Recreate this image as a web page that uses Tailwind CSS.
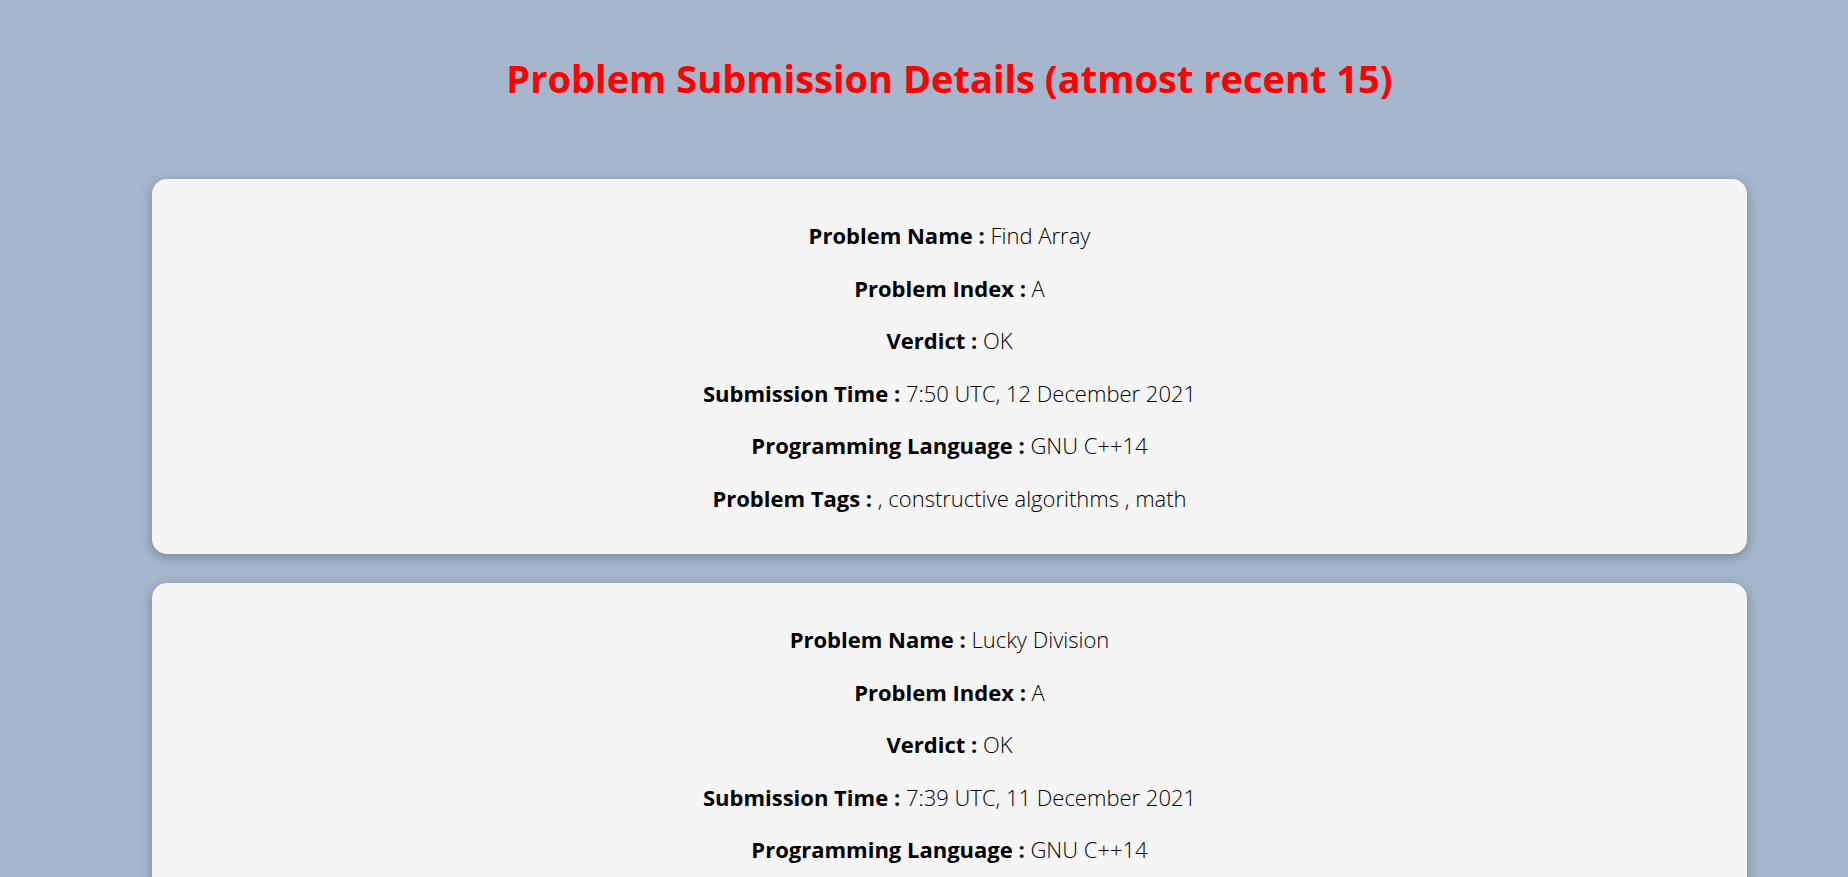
<!DOCTYPE html>
<html lang="en">
<head>
<meta charset="utf-8">
<title>Problem Submission Details</title>
<script src="https://cdn.jsdelivr.net/npm/@tailwindcss/browser@4"></script>
</head>
<body class="bg-[#a5b6cd] min-h-screen overflow-x-hidden font-['Segoe_UI','Open_Sans','Noto_Sans',sans-serif] text-black text-center">
<main class="h-screen overflow-hidden pl-[152px] pr-[101px] pt-[53px]">
<h1 class="text-[38px] leading-[50px] font-[680] text-[#ff0000]">Problem Submission Details (atmost recent 15)</h1>
<div class="mt-[76px] flex flex-col gap-[29px] text-[22px] leading-[30px] font-[330]">
<article class="grid grid-rows-6 items-center min-h-[375px] py-[30px] rounded-[15px] bg-[#f5f5f5] shadow-[0_3px_12px_0_rgba(0,0,0,0.28)]">
<p><b class="font-[660]">Problem Name :</b> Find Array</p>
<p><b class="font-[660]">Problem Index :</b> A</p>
<p><b class="font-[660]">Verdict :</b> OK</p>
<p><b class="font-[660]">Submission Time :</b> 7:50 UTC, 12 December 2021</p>
<p><b class="font-[660]">Programming Language :</b> GNU C++14</p>
<p><b class="font-[660]">Problem Tags :</b> , constructive algorithms , math</p>
</article>
<article class="grid grid-rows-6 items-center min-h-[375px] py-[30px] rounded-[15px] bg-[#f5f5f5] shadow-[0_3px_12px_0_rgba(0,0,0,0.28)]">
<p><b class="font-[660]">Problem Name :</b> Lucky Division</p>
<p><b class="font-[660]">Problem Index :</b> A</p>
<p><b class="font-[660]">Verdict :</b> OK</p>
<p><b class="font-[660]">Submission Time :</b> 7:39 UTC, 11 December 2021</p>
<p><b class="font-[660]">Programming Language :</b> GNU C++14</p>
</article>
</div>
</main>
</body>
</html>
